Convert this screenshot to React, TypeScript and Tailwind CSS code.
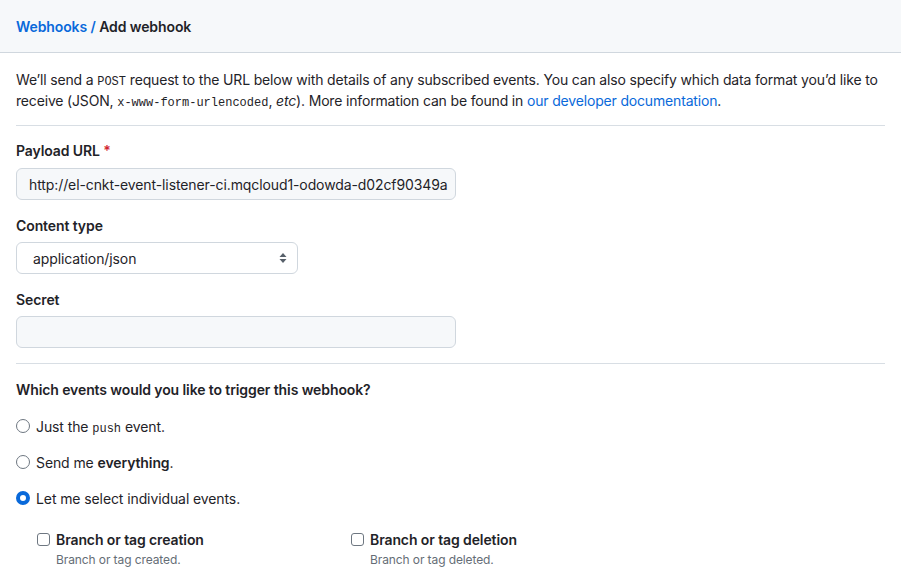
import React from 'react'

const mono = { fontFamily: '"Liberation Mono", "DejaVu Sans Mono", monospace' }

function Code({ children }: { children: React.ReactNode }) {
  return (
    <code style={mono} className="text-[12px] leading-none tracking-normal">
      {children}
    </code>
  )
}

function Radio({ checked, children }: { checked?: boolean; children: React.ReactNode }) {
  return (
    <label className="flex items-center gap-[6px] h-[20px]">
      {checked ? (
        <span className="w-[14px] h-[14px] rounded-full border-[4px] border-[#0969da] bg-white flex-shrink-0" />
      ) : (
        <span className="w-[14px] h-[14px] rounded-full border border-[#6e7781] bg-white flex-shrink-0" />
      )}
      <span>{children}</span>
    </label>
  )
}

function EventCheck({ title, desc }: { title: string; desc: string }) {
  return (
    <div className="flex gap-[6px]">
      <span className="mt-[3px] w-[13px] h-[13px] rounded-[3px] border border-[#6e7781] bg-white flex-shrink-0" />
      <div>
        <div className="font-semibold leading-[20px]">{title}</div>
        <div className="text-[12px] text-[#656d76] leading-[20px]">{desc}</div>
      </div>
    </div>
  )
}

export default function App() {
  return (
    <div
      className="w-[901px] h-[578px] overflow-hidden bg-white text-[14px] text-[#1f2328] tracking-[-0.1px]"
      style={{ fontFamily: 'Inter, "Noto Sans", "Liberation Sans", sans-serif' }}
    >
      {/* Header */}
      <div className="h-[53px] bg-[#f6f8fa] border-b border-[#d0d7de] px-[16px] flex items-center">
        <h2 className="font-semibold">
          <a className="text-[#0969da]">Webhooks /</a> <span>Add webhook</span>
        </h2>
      </div>

      <div className="px-[16px]">
        <p className="pt-[16px] pb-[14px] leading-[21px] tracking-[-0.17px] border-b border-[#d8dee4]">
          We’ll send a <Code>POST</Code> request to the URL below with details of any subscribed events. You can also
          specify which data format you’d like to receive (JSON, <Code>x-www-form-urlencoded</Code>, <em>etc</em>). More
          information can be found in <a className="text-[#0969da]">our developer documentation</a>.
        </p>

        <div className="pt-[15px]">
          <label className="block font-semibold leading-[20px]">
            Payload URL <span className="text-[#d1242f]">*</span>
          </label>
          <div className="mt-[7px] w-[440px] h-[32px] rounded-[6px] border border-[#d0d7de] bg-[#f6f8fa] px-[12px] flex items-center overflow-hidden whitespace-nowrap">
            http://el-cnkt-event-listener-ci.mqcloud1-odowda-d02cf90349a
          </div>
        </div>

        <div className="pt-[16px]">
          <label className="block font-semibold leading-[20px]">Content type</label>
          <div className="mt-[6px] w-[282px] h-[32px] rounded-[6px] border border-[#d0d7de] bg-white pl-[16px] pr-[10px] flex items-center justify-between">
            <span>application/json</span>
            <svg width="8" height="12" viewBox="0 0 8 12">
              <path d="M4 1 L7.5 5 H0.5 Z" fill="#57606a" />
              <path d="M4 11 L7.5 7 H0.5 Z" fill="#57606a" />
            </svg>
          </div>
        </div>

        <div className="pt-[16px]">
          <label className="block font-semibold leading-[20px]">Secret</label>
          <div className="mt-[6px] w-[440px] h-[32px] rounded-[6px] border border-[#d0d7de] bg-[#f6f8fa]" />
        </div>

        <div className="mt-[15px] border-t border-[#d8dee4] pt-[16px]">
          <div className="font-semibold leading-[20px]">Which events would you like to trigger this webhook?</div>
          <div className="mt-[16px] flex flex-col gap-[16px]">
            <Radio>
              Just the <Code>push</Code> event.
            </Radio>
            <Radio>
              Send me <strong className="font-semibold">everything</strong>.
            </Radio>
            <Radio checked>Let me select individual events.</Radio>
          </div>
          <div className="mt-[22px] pl-[21px] grid grid-cols-[314px_314px]">
            <EventCheck title="Branch or tag creation" desc="Branch or tag created." />
            <EventCheck title="Branch or tag deletion" desc="Branch or tag deleted." />
          </div>
        </div>
      </div>
    </div>
  )
}
